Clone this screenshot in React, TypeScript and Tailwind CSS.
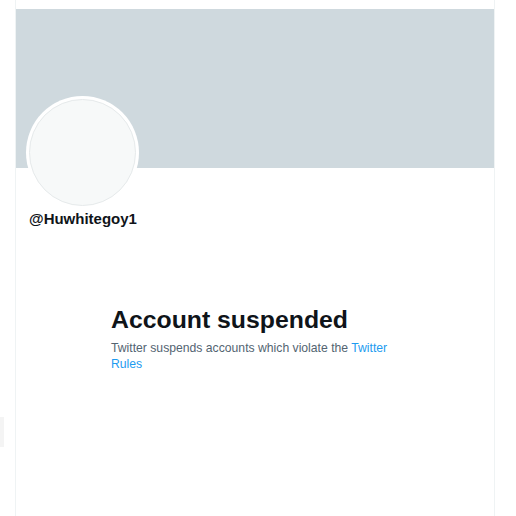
export default function App() {
  return (
    <div className="flex h-[516px] w-[516px] overflow-hidden bg-white" style={{ fontFamily: '"Liberation Sans", Arial, sans-serif' }}>
      <div className="w-[15px] shrink-0 pt-[417px]">
        <div className="h-[30px] w-[4px] bg-[#f4f4f4]" />
      </div>
      <div className="flex w-[480px] shrink-0 flex-col border-x border-[#eff3f4]">
        <div className="h-[9px] bg-white" />
        <div className="h-[159px] bg-[#cfd9de]" />
        <div className="pl-[10px]">
          <div className="-mt-[72px] flex h-[113px] w-[113px] items-center justify-center rounded-full bg-white">
            <div className="h-[107px] w-[107px] rounded-full border border-[#e6eaeb] bg-[#f7f9f9]" />
          </div>
        </div>
        <div className="pl-[13px] text-[15px] font-bold leading-[20px] text-[#0f1419]">@Huwhitegoy1</div>
        <div className="mx-auto mt-[77px] w-[288px]">
          <div className="text-[24.8px] font-bold leading-[28px] text-[#0f1419]">Account suspended</div>
          <div className="mt-[6px] text-[12.2px] leading-[16px] text-[#536471]">
            Twitter suspends accounts which violate the <span className="text-[#1d9bf0]">Twitter Rules</span>
          </div>
        </div>
      </div>
    </div>
  );
}
